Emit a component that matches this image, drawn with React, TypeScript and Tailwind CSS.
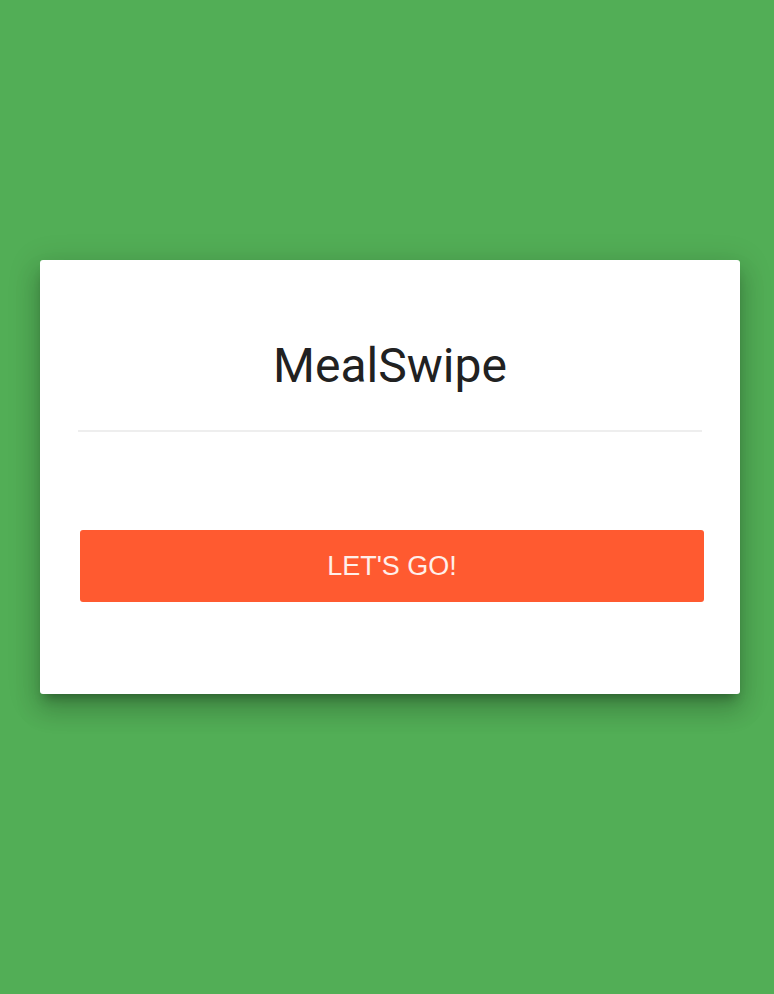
export default function App() {
  return (
    <div className="min-h-[994px] bg-[#52ae56] px-10 pt-[260px]">
      <div className="flex h-[434px] w-[700px] flex-col rounded-[3px] bg-white px-[38px] pt-[78px] shadow-[0_16px_24px_2px_rgba(0,0,0,0.14),0_6px_30px_5px_rgba(0,0,0,0.12),0_8px_10px_-5px_rgba(0,0,0,0.3)]">
        <h1 className="text-center font-['Roboto',sans-serif] text-[48px] leading-[56px] text-[#212121]">
          MealSwipe
        </h1>
        <div className="mt-9 h-[2px] w-[624px] bg-[#eeeeee]" />
        <button className="ml-[2px] mt-[98px] flex h-[72px] w-[624px] items-center justify-center rounded-[3px] bg-[#ff5a30] font-['Liberation_Sans',Arial,sans-serif] text-[27px] text-white/90">
          LET'S GO!
        </button>
      </div>
    </div>
  );
}
